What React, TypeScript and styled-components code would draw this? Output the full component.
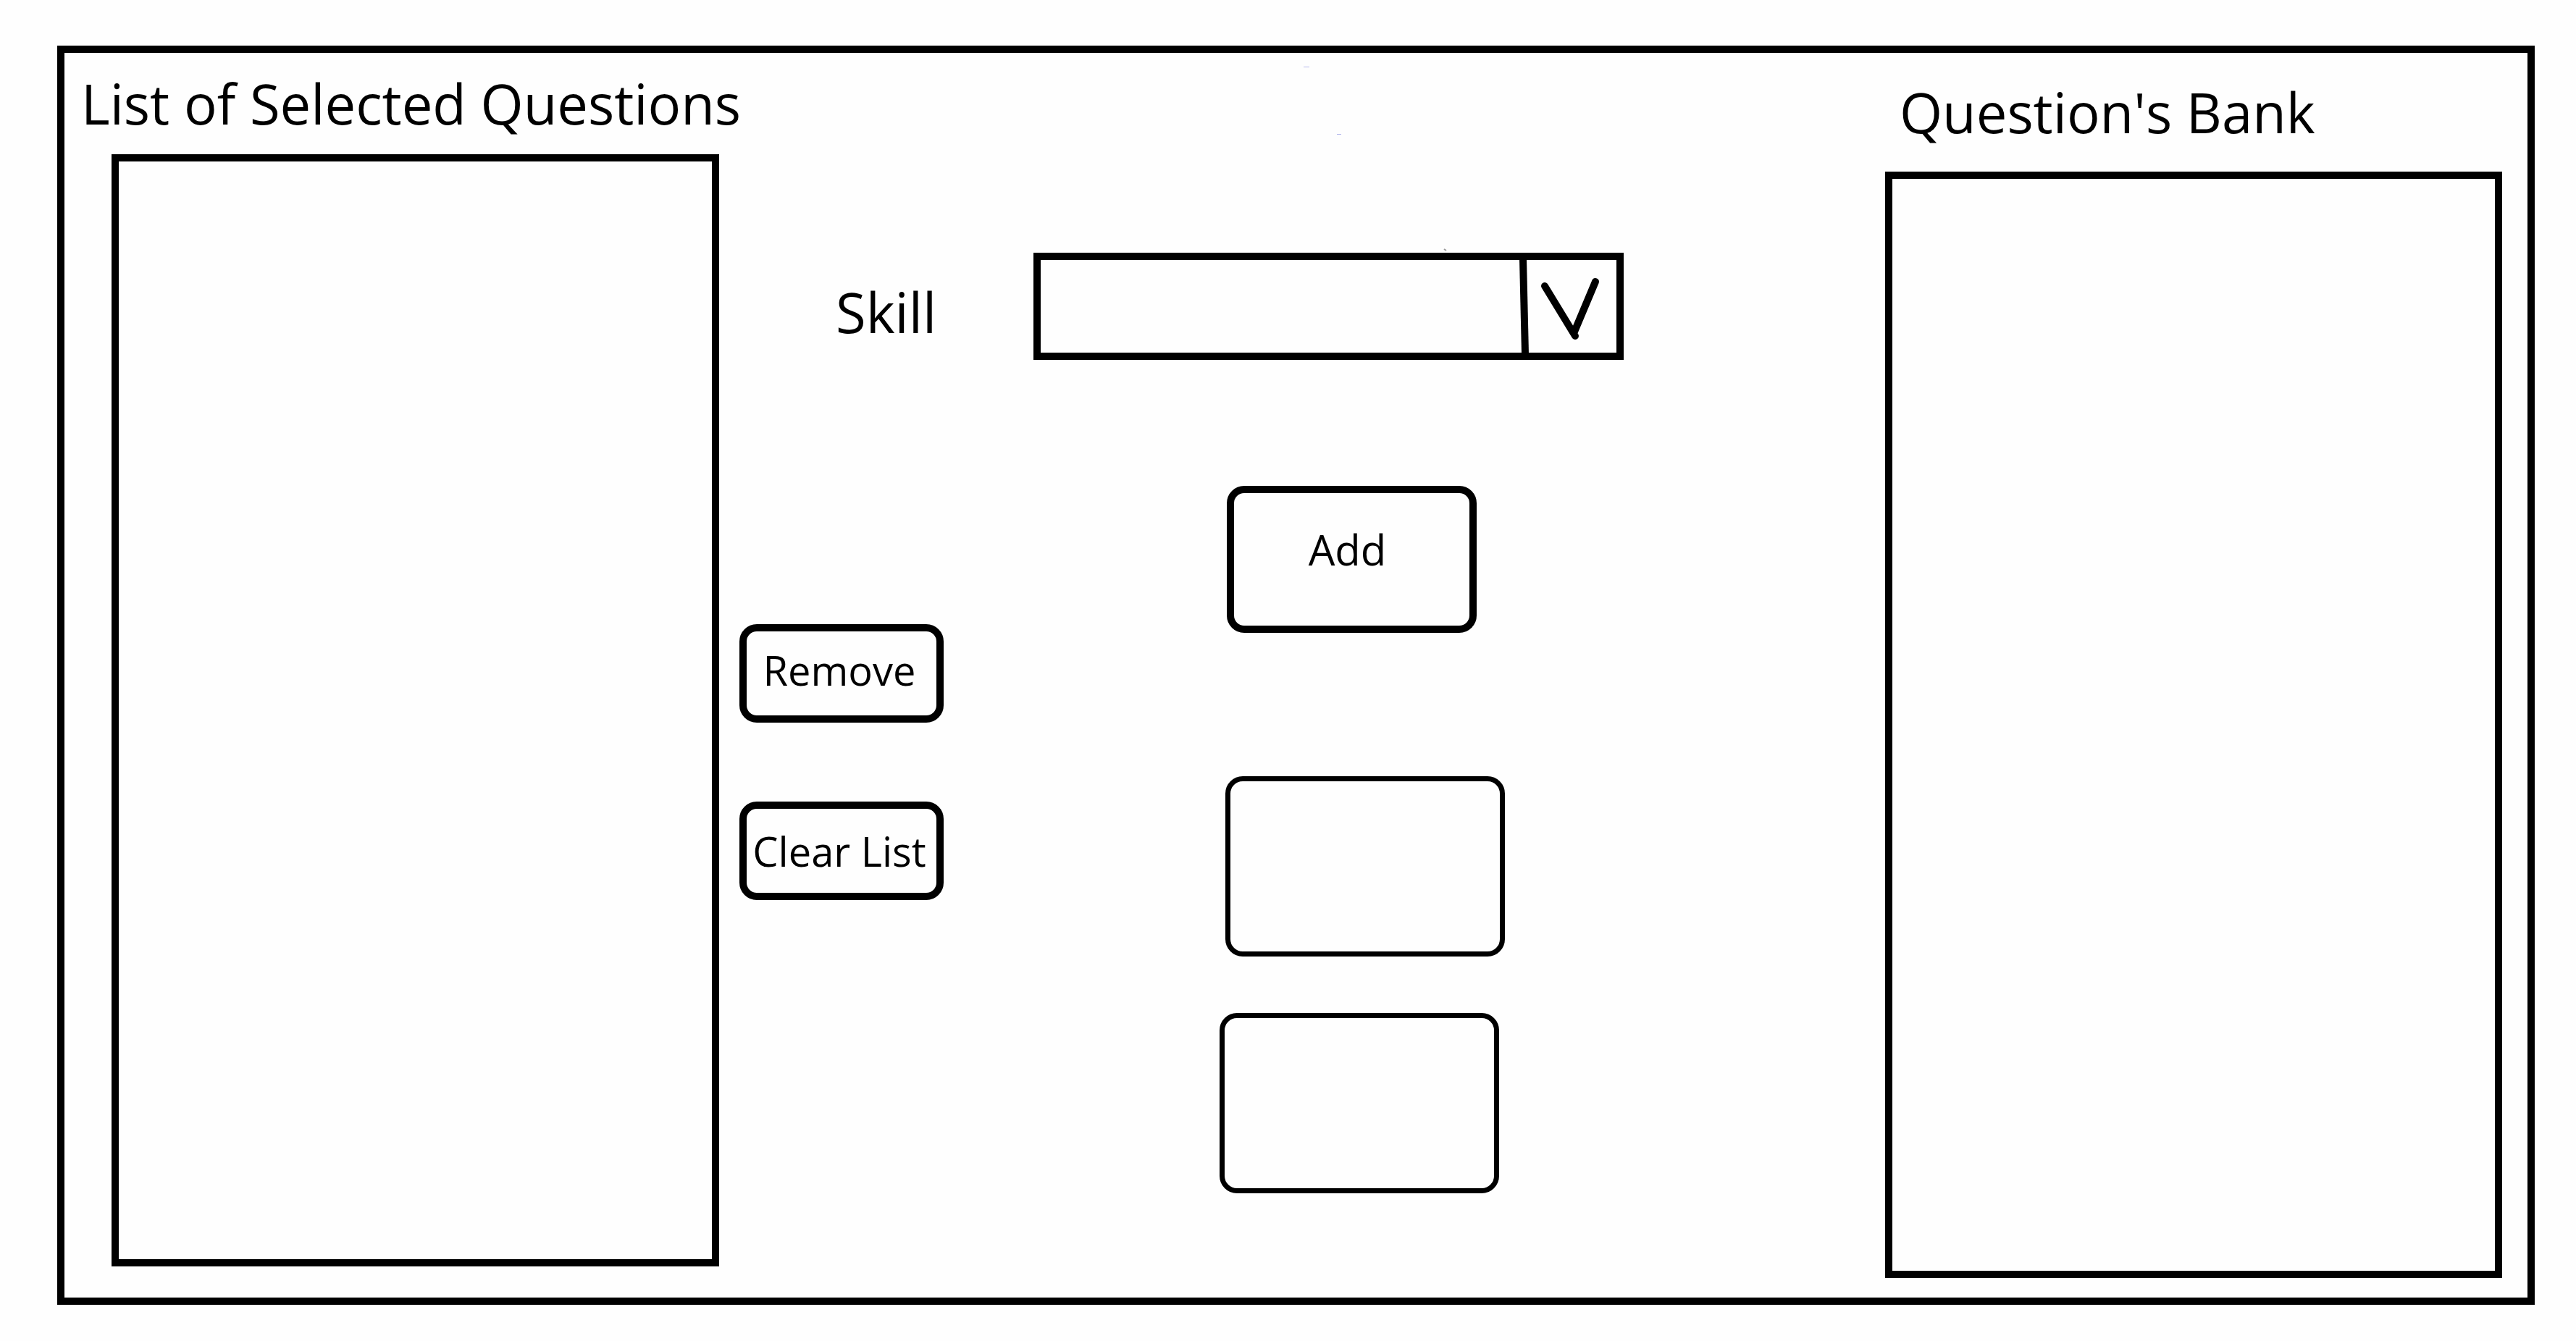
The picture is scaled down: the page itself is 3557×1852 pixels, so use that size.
import React from "react";
import styled, { createGlobalStyle } from "styled-components";

const ink = "#000000";
const paper = "#fefefe";

const GlobalStyle = createGlobalStyle`
  *, *::before, *::after {
    box-sizing: border-box;
  }
  body {
    margin: 0;
    background: ${paper};
    color: ${ink};
    font-family: "Open Sans", "Noto Sans", sans-serif;
  }
`;

const Page = styled.div`
  display: flex;
  min-height: 100vh;
  padding: 63px 57px 50px 79px;
`;

const Frame = styled.main`
  position: relative;
  flex: 1;
  display: grid;
  grid-template-columns: 881fr 1554fr 852fr;
  column-gap: 28px;
  padding: 0 35px 0 23px;
  border: 10px solid ${ink};
`;

const ListColumn = styled.section<{ $top: number; $bottom: number }>`
  display: flex;
  flex-direction: column;
  min-width: 0;
  gap: ${(p) => p.$top}px;
  padding: ${(p) => p.$top}px 0 ${(p) => p.$bottom}px;
`;

const Heading = styled.h2<{ $indent?: number }>`
  margin: 0;
  padding-left: ${(p) => p.$indent ?? 0}px;
  font-size: 76px;
  line-height: 104px;
  font-weight: 400;
  white-space: nowrap;
`;

const QuestionList = styled.ul<{ $indent?: number }>`
  flex: 1;
  margin: 0 0 0 ${(p) => p.$indent ?? 0}px;
  padding: 0;
  list-style: none;
  border: 10px solid ${ink};
`;

const Controls = styled.section`
  min-width: 0;
  padding: 276px 333px 0 0;
`;

const SkillRow = styled.div`
  display: flex;
  align-items: center;
  gap: 134px;
  padding-left: 133px;
`;

const SkillLabel = styled.label`
  padding-top: 16px;
  font-size: 76px;
  line-height: 104px;
`;

const SelectBox = styled.div`
  position: relative;
  flex: 1;
  height: 148px;
`;

const Select = styled.select`
  display: block;
  width: 100%;
  height: 100%;
  padding: 0 160px 0 24px;
  appearance: none;
  border: 10px solid ${ink};
  border-radius: 0;
  background: ${paper};
  color: ${ink};
  font: inherit;
  font-size: 56px;
`;

const SelectArrow = styled.svg`
  position: absolute;
  top: 0;
  right: 0;
  width: 148px;
  height: 148px;
  pointer-events: none;
`;

const ButtonArea = styled.div`
  display: grid;
  grid-template-columns: 663fr 558fr;
`;

const ButtonColumn = styled.div<{ $top: number }>`
  display: flex;
  flex-direction: column;
  align-items: flex-start;
  padding-top: ${(p) => p.$top}px;
`;

const Button = styled.button`
  display: flex;
  align-items: center;
  justify-content: center;
  padding: 0;
  border: 10px solid ${ink};
  border-radius: 24px;
  background: ${paper};
  color: ${ink};
  font-family: inherit;
  white-space: nowrap;
`;

const SideButton = styled(Button)<{ $lift?: number }>`
  width: 282px;
  height: 136px;
  padding: 0 6px ${(p) => p.$lift ?? 0}px 0;
  font-size: 56px;
  line-height: 76px;

  & + & {
    margin-top: 109px;
  }
`;

const AddButton = styled(Button)`
  width: 345px;
  height: 203px;
  margin: 0 0 198px 10px;
  padding: 0 12px 28px 0;
  font-size: 58px;
  line-height: 80px;
`;

const BlankButton = styled(Button)<{ $indent?: number }>`
  width: 386px;
  height: 249px;
  margin-left: ${(p) => p.$indent ?? 0}px;
  border-width: 7px;

  & + & {
    margin-top: 78px;
  }
`;

const PenMarks = styled.svg`
  position: absolute;
  top: 0;
  left: 50%;
  width: 240px;
  height: 280px;
  pointer-events: none;
`;

export default function App() {
  return (
    <>
      <GlobalStyle />
      <Page>
        <Frame>
          <ListColumn $top={18} $bottom={43}>
            <Heading id="selected-title">List of Selected Questions</Heading>
            <QuestionList $indent={42} aria-labelledby="selected-title" />
          </ListColumn>

          <Controls>
            <SkillRow>
              <SkillLabel htmlFor="skill">Skill</SkillLabel>
              <SelectBox>
                <Select id="skill" defaultValue="">
                  <option value="" />
                </Select>
                <SelectArrow viewBox="0 0 148 148" aria-hidden="true">
                  <path d="M9 8 L12 140" stroke={ink} strokeWidth="10" fill="none" />
                  <path
                    d="M39 46 L81 115 M80 109 L109 40"
                    stroke={ink}
                    strokeWidth="10"
                    strokeLinecap="round"
                    fill="none"
                  />
                </SelectArrow>
              </SelectBox>
            </SkillRow>

            <ButtonArea>
              <ButtonColumn $top={365}>
                <SideButton type="button" $lift={10}>
                  Remove
                </SideButton>
                <SideButton type="button">Clear List</SideButton>
              </ButtonColumn>
              <ButtonColumn $top={174}>
                <AddButton type="button">Add</AddButton>
                <BlankButton type="button" $indent={8} aria-label="Action one" />
                <BlankButton type="button" aria-label="Action two" />
              </ButtonColumn>
            </ButtonArea>
          </Controls>

          <ListColumn $top={30} $bottom={27}>
            <Heading id="bank-title" $indent={20}>
              Question's Bank
            </Heading>
            <QuestionList aria-labelledby="bank-title" />
          </ListColumn>

          <PenMarks viewBox="0 0 240 280" aria-hidden="true">
            <path d="M10 19.5 h8 M56 112.5 h6" stroke="#b4b8ec" strokeWidth="1" />
            <path d="M204 271 l3 2" stroke="#999999" strokeWidth="2" />
          </PenMarks>
        </Frame>
      </Page>
    </>
  );
}
